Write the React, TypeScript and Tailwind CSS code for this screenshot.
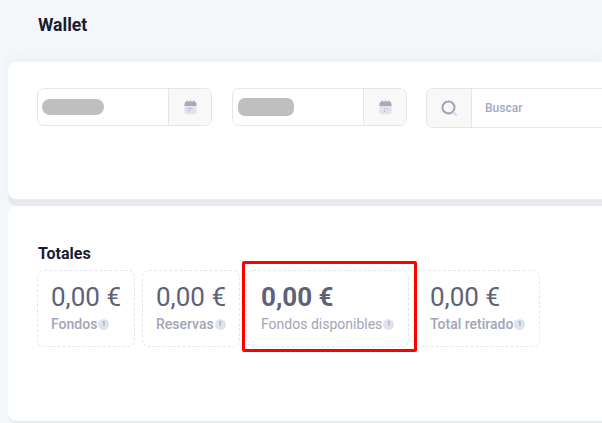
const font = { fontFamily: "Roboto, 'Liberation Sans', sans-serif" };

function CalendarIcon({ dots }: { dots?: boolean }) {
  return (
    <svg width="13" height="15" viewBox="0 0 13 15" className="block">
      <rect x="0.5" y="1.5" width="12" height="13" rx="3" fill="#e1e3ec" />
      <path d="M0.5 6V4.5a3 3 0 0 1 3-3h6a3 3 0 0 1 3 3V6z" fill="#a7abbd" />
      <path d="M3 0.5v2M6.5 0.5v2M10 0.5v2" stroke="#a7abbd" strokeWidth="1.2" />
      {dots ? (
        <path d="M5 9h1M7.5 9h1M5 11.5h1" stroke="#a1a5b7" strokeWidth="1" />
      ) : (
        <path d="M3.5 8.5h5M3.5 10.5h3" stroke="#b5b8c8" strokeWidth="1" />
      )}
    </svg>
  );
}

function DateField({ pillClass, dots }: { pillClass: string; dots?: boolean }) {
  return (
    <div className="flex h-[38px] w-[175px] shrink-0 overflow-hidden rounded-[7px] border border-[#e4e6ef] bg-white">
      <div className="flex min-w-0 flex-1 items-center">
        <div className={pillClass} />
      </div>
      <div className="flex w-[43px] shrink-0 items-center justify-center border-l border-[#e4e6ef] bg-[#f8f8f9]">
        <CalendarIcon dots={dots} />
      </div>
    </div>
  );
}

function InfoDot() {
  return (
    <span className="ml-px inline-flex h-[11px] w-[11px] shrink-0 items-center justify-center rounded-full bg-[#e1e3ec] text-[8px] font-bold leading-none text-[#9a9eb2]">
      !
    </span>
  );
}

function Stat({
  label,
  boxClass,
  strong,
  labelClass,
}: {
  label: string;
  boxClass: string;
  strong?: boolean;
  labelClass: string;
}) {
  return (
    <div className={`h-[77px] shrink-0 rounded-[7px] border border-dashed border-[#e4e6ef] pt-[10px] ${boxClass}`}>
      <div className={`text-[26px] leading-[32px] text-[#5e6278] ${strong ? "font-bold" : "font-normal"}`}>0,00 €</div>
      <div className={`mt-[3px] flex items-center text-[14px] leading-[16px] text-[#a1a5b7] ${labelClass}`}>
        <span>{label}</span>
        <InfoDot />
      </div>
    </div>
  );
}

export default function App() {
  return (
    <div style={font} className="relative h-[423px] w-[602px] overflow-hidden bg-[#f4f7fa]">
      <div className="h-[62px] pl-[38px] pt-[14px] text-[17.6px] font-bold leading-[22px] text-[#181c32]">Wallet</div>
      <div className="ml-[8px] h-[137px] rounded-l-[8px] bg-white pl-[29px] pt-[26px] shadow-[0_7px_0_0_#e6e9ed,0_-4px_10px_rgba(76,87,125,0.05)]">
        <div className="flex items-start">
          <DateField pillClass="ml-[4px] h-[16px] w-[62px] rounded-[8px] bg-[#bfbfbf]" />
          <div className="w-[20px] shrink-0" />
          <DateField pillClass="ml-[5px] h-[18px] w-[56px] rounded-[7px] bg-[#bfbfbf]" dots />
          <div className="w-[19px] shrink-0" />
          <div className="flex h-[40px] w-[300px] shrink-0 rounded-l-[7px] border border-r-0 border-[#e4e6ef] bg-white">
            <div className="flex w-[45px] shrink-0 items-center justify-center rounded-l-[7px] border-r border-[#e4e6ef] bg-[#f8f8f9]">
              <svg width="17" height="17" viewBox="0 0 17 17">
                <circle cx="7.5" cy="7.5" r="6" fill="none" stroke="#9aa3bd" strokeWidth="2" />
                <path d="M12.5 12.5l2.5 2.5" stroke="#d5d7e2" strokeWidth="2" strokeLinecap="round" />
              </svg>
            </div>
            <div className="flex items-center pl-[13px] text-[12px] font-medium text-[#a1a9c3]">Buscar</div>
          </div>
        </div>
      </div>
      <div className="relative mt-[7px] ml-[8px] h-[215px] rounded-l-[8px] bg-white pl-[29px] pt-[38px] shadow-[0_2px_0_0_#e6e9ed]">
        <div className="pl-px text-[16px] font-bold leading-[20px] text-[#181c32]">Totales</div>
        <div className="mt-[6px] flex">
          <Stat label="Fondos" boxClass="w-[98px] pl-[13px]" labelClass="font-medium" />
          <div className="w-[7px] shrink-0" />
          <Stat label="Reservas" boxClass="w-[98px] pl-[13px]" labelClass="font-medium" />
          <div className="w-[6px] shrink-0" />
          <Stat label="Fondos disponibles" boxClass="w-[163px] pl-[14px]" strong labelClass="font-normal" />
          <div className="w-[7px] shrink-0" />
          <Stat label="Total retirado" boxClass="w-[124px] pl-[13px]" labelClass="font-medium" />
        </div>
      </div>
      <div className="absolute left-[242px] top-[261px] h-[91px] w-[175px] rounded-[2px] border-[3px] border-[#ff0000]" />
    </div>
  );
}
